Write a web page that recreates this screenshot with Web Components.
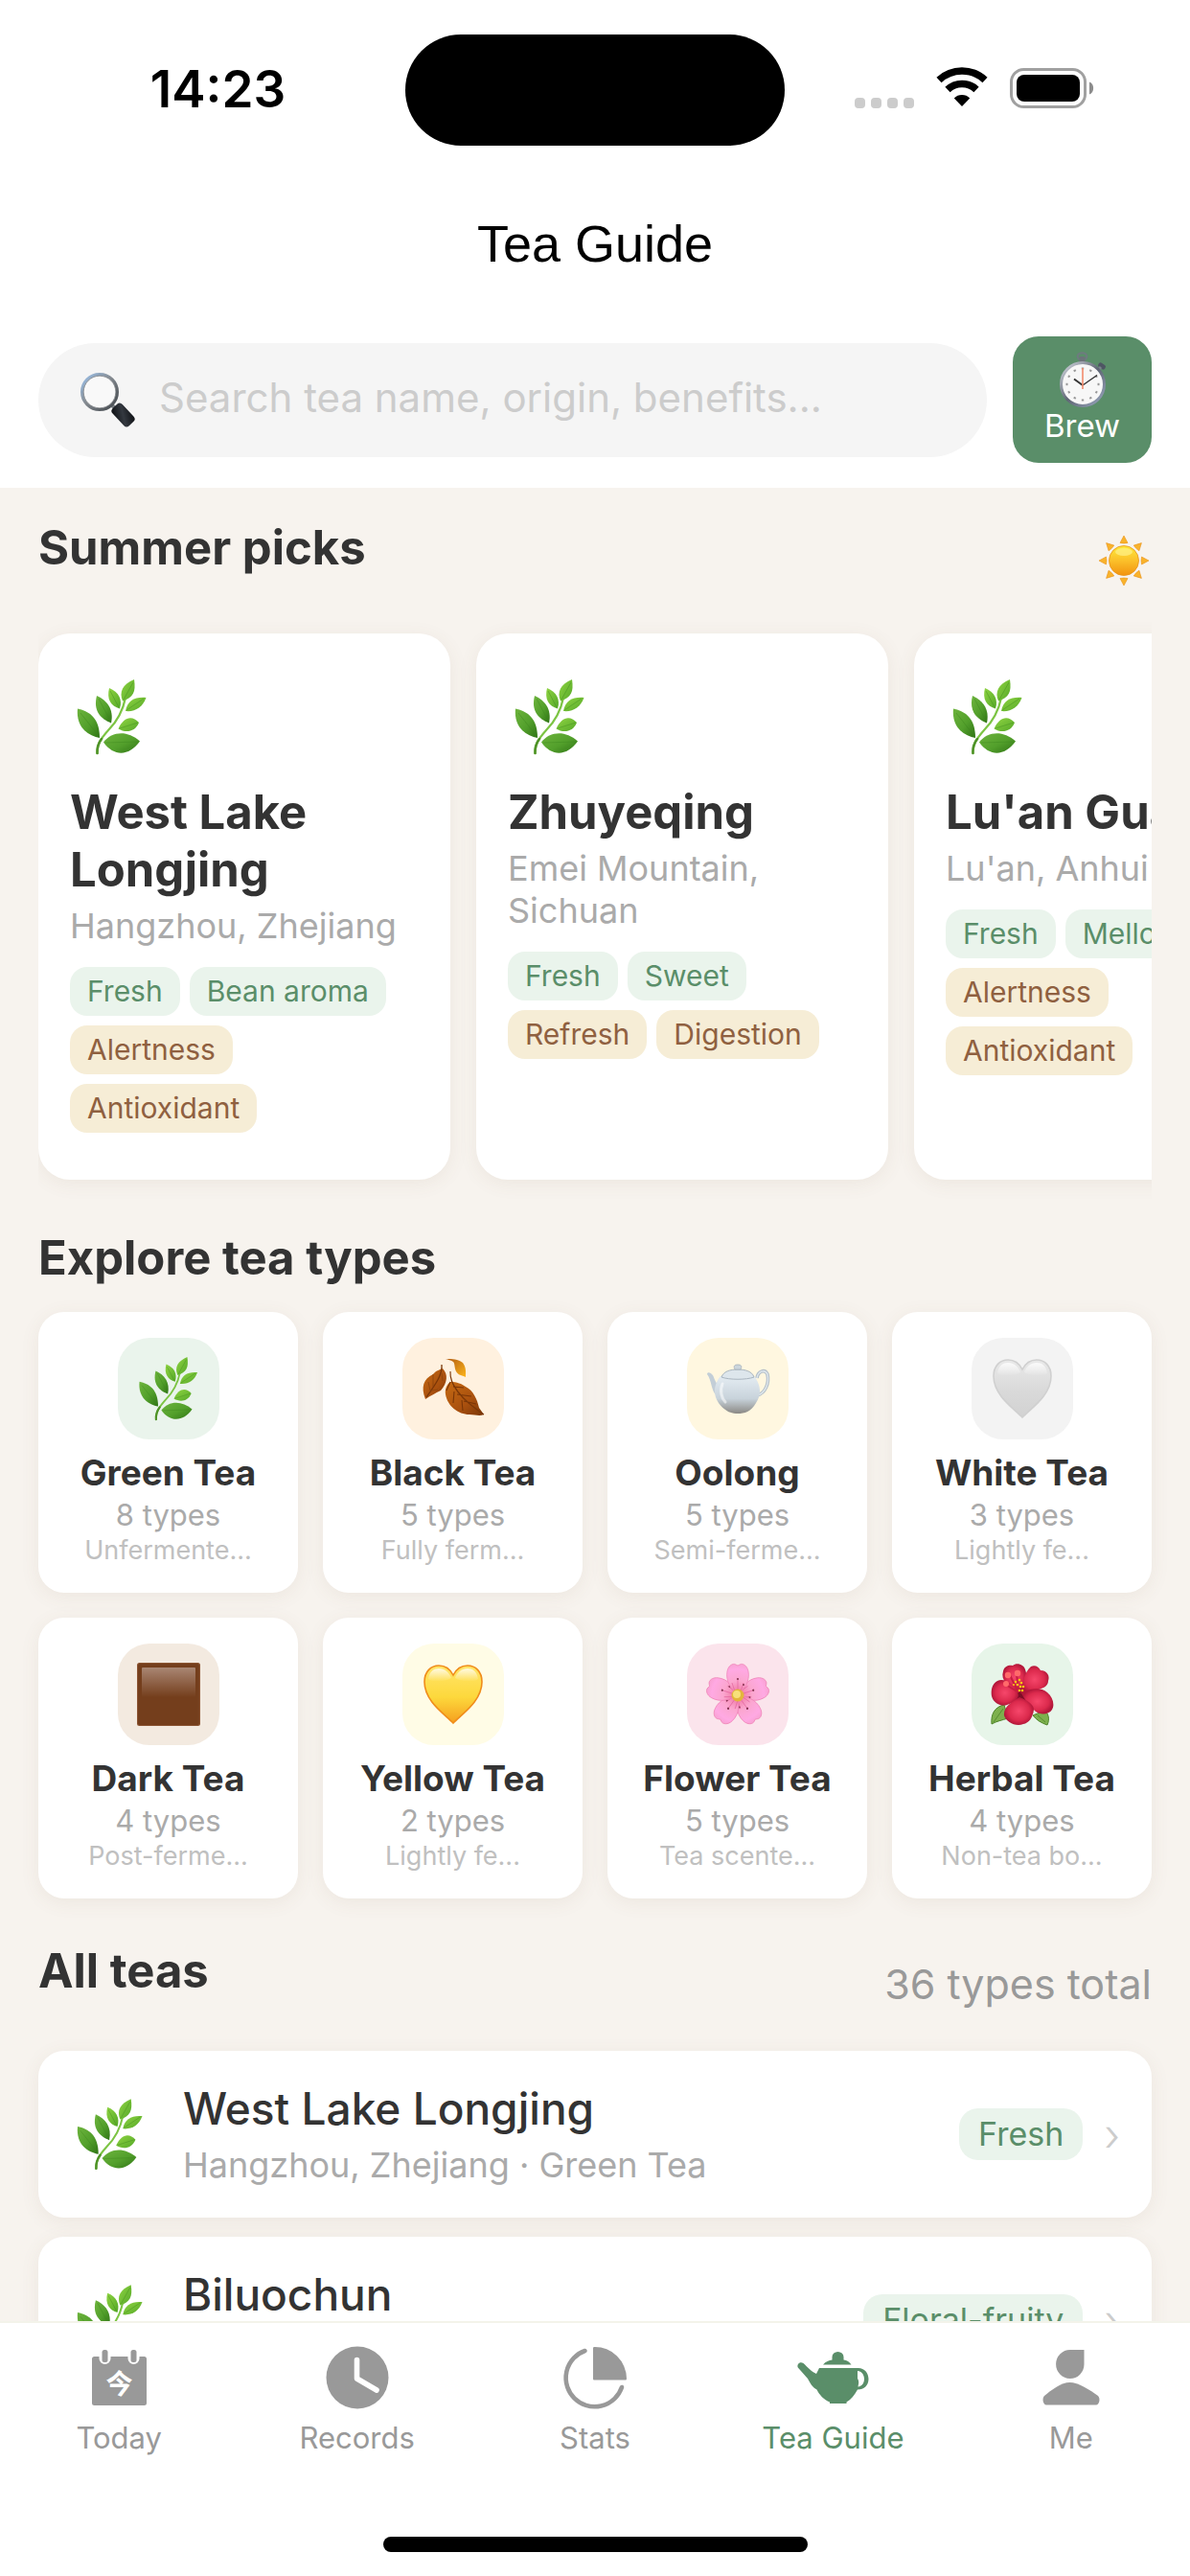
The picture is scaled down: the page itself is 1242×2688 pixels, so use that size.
<!DOCTYPE html>
<html lang="en">
<head>
<meta charset="utf-8">
<meta name="viewport" content="width=device-width, initial-scale=1">
<title>Tea Guide</title>
<style>
  html, body { margin: 0; height: 100%; }
  body {
    font-family: Inter, "Noto Sans CJK SC", sans-serif;
    color: #333;
    background: #f7f3ee;
    --green: #5a8e69;
    --mint: #eaf4ec;
    --sand: #f6edd6;
    --brown: #8f6040;
    --edge: 40px;
  }
</style>
</head>
<body>
<tea-app></tea-app>

<script>
/* Shared helper: attach an open root filled with styles and markup. */
const COMMON = `*{box-sizing:border-box} a{color:inherit;text-decoration:none} button,input{font:inherit;border:0;margin:0}`;
function define(name, css, html) {
  customElements.define(name, class extends HTMLElement {
    connectedCallback() {
      if (this.shadowRoot) return;
      const root = this.attachShadow({ mode: 'open' });
      const markup = typeof html === 'function' ? html(this) : html;
      root.innerHTML = `<style>${COMMON}${css}</style>${markup}`;
    }
  });
}
const attr = (el, n) => el.getAttribute(n) || '';

/* ---------- Icons ---------- */
const heart = (a, b, c, edge) => `<svg viewBox="0 0 66 66"><defs>
  <linearGradient id="h" x1="0" y1="0" x2="0" y2="1"><stop offset="0" stop-color="${a}"/><stop offset=".55" stop-color="${b}"/><stop offset="1" stop-color="${c}"/></linearGradient>
  <linearGradient id="s" x1="0" y1="0" x2="0" y2="1"><stop offset="0" stop-color="#fff" stop-opacity=".8"/><stop offset="1" stop-color="#fff" stop-opacity="0"/></linearGradient></defs>
  <path d="M33 63C26 55 3 41 3 20C3 9 10 3 18 3C25 3 30 7 33 13C36 7 41 3 48 3C56 3 63 9 63 20C63 41 40 55 33 63Z" fill="url(#h)" stroke="${edge}" stroke-width="1.6"/>
  <path d="M7 17C8 9 13 6 18 6C24 6 29 10 31 16C25 20 12 21 7 17ZM35 16C37 10 42 6 48 6C53 6 58 9 59 17C54 21 41 20 35 16Z" fill="url(#s)"/></svg>`;

const petal = (r) => `<g transform="rotate(${r} 33 34)"><path d="M33 33C26 28 20 19 22 9C23 3 28 0 31 2L33 3L35 2C38 0 43 3 44 9C46 19 40 28 33 33Z" fill="url(#p)" stroke="#ee7fb4" stroke-width=".7"/>
  <path d="M33 30V18M30 30L27 21M36 30L39 21" stroke="#e2659f" stroke-width=".7" fill="none"/><circle cx="33" cy="17" r="1.1" fill="#84324f"/><circle cx="39" cy="23" r="1" fill="#84324f"/></g>`;

const ICONS = {
  herb: `<svg viewBox="0 0 72 78"><defs>
    <linearGradient id="a" x1="0" y1="0" x2="1" y2="1"><stop offset="0" stop-color="#6db43d"/><stop offset=".55" stop-color="#529f2b"/><stop offset="1" stop-color="#2f7415"/></linearGradient>
    <linearGradient id="b" x1="0" y1="0" x2="1" y2="1"><stop offset="0" stop-color="#8fd442"/><stop offset="1" stop-color="#55a828"/></linearGradient></defs>
    <path d="M20.5 77C20 68 24 62 32 53C41 44 47 34 50 19" fill="none" stroke="#7cc443" stroke-width="2.2" stroke-linecap="round"/>
    <path d="M20.5 77C20 70 22 66 25 62" fill="none" stroke="#4f9328" stroke-width="2.6" stroke-linecap="round"/>
    <path d="M0 30.500C12 33 23 40 23 61C12 59 -2 51 0 30.500Z" fill="url(#a)"/>
    <path d="M20 17C31 22 38 31 35 45.500C24 41 16 33 20 17Z" fill="url(#a)"/>
    <path d="M27 65.500C36 54 52 53 65 64.500C54 80 38 81 27 65.500Z" fill="url(#a)"/>
    <path d="M33 9C43 13 47 21 44 30.500C35 28 30 21 33 9Z" fill="url(#b)"/>
    <path d="M59 0C47 5 43 13 47 22.500C58 19 61 13 59 0Z" fill="url(#b)"/>
    <path d="M71.500 19C60 18 52 22 50 33C60 34 68 29 71.500 19Z" fill="url(#b)"/>
    <path d="M64 45C57 37 48 39 42.500 51.500C50 56 60 55 64 45Z" fill="url(#b)"/>
    <path d="M3 35L22 59M22 20L34 43M34 12L43 29M58 3L48 21M69 20L51 32M63 45L44 51M63 65L29 66" stroke="#3c861d" stroke-width=".7" opacity=".6" fill="none"/></svg>`,
  leaves: `<svg viewBox="0 0 66 66"><defs>
    <linearGradient id="l" x1="0" y1="0" x2="1" y2="1"><stop offset="0" stop-color="#c66b13"/><stop offset=".6" stop-color="#a9500e"/><stop offset="1" stop-color="#7a3607"/></linearGradient>
    <linearGradient id="m" x1="0" y1="0" x2="1" y2="1"><stop offset="0" stop-color="#b05a10"/><stop offset="1" stop-color="#fdb61d"/></linearGradient></defs>
    <path d="M25 2C32 2 38 2 43 6C47 11 46 17 46 21C42 19 38 19 36 15C34 11 35 7 33 5C30 3 28 3 25 2Z" fill="url(#m)"/>
    <path d="M4 44C-1 31 2 23 12 18C15 14 20 13 22 12C28 18 27 27 20 35C14 38 10 40 4 44Z" fill="url(#l)"/>
    <path d="M21 8C22 18 15 28 5 42" fill="none" stroke="#7a3607" stroke-width="1.300"/>
    <path d="M30 26C37 26 42 28 46 31C54 35 58 44 60 53L65 60C60 62 56 60 50 60C38 60 27 51 25 39C24 33 27 28 30 26Z" fill="url(#l)"/>
    <path d="M30 15C29 28 41 44 65 60M33 31L44 32M37 39L52 41M44 46L57 49M30 26L26 35M34 36L33 48M42 45L43 56" fill="none" stroke="#7a3607" stroke-width="1.100"/>
    <path d="M12 18L12 31M21 17L22 25M7 26L9 35L17 34" fill="none" stroke="#8b430a" stroke-width=".8"/></svg>`,
  teapot: `<svg viewBox="0 0 66 66"><defs>
    <linearGradient id="t" x1="0" y1="0" x2="0" y2="1"><stop offset="0" stop-color="#e4ecf2"/><stop offset=".6" stop-color="#c8d3db"/><stop offset="1" stop-color="#8b8985"/></linearGradient></defs>
    <path d="M53 22C54 15 61 12 64 18C66 27 62 38 53 40" fill="none" stroke="#b4bfc8" stroke-width="3.600"/>
    <path d="M53 22C54 15 61 12 64 18C66 27 62 38 53 40" fill="none" stroke="#dfe7ed" stroke-width="1.400"/>
    <path d="M1 18C1 15 5 16 7 19C9 23 10 28 14 30C13 34 12 37 11 40C5 36 6 24 1 18Z" fill="#c3ced7"/>
    <path d="M15 20C9 27 6 38 13 48C20 57 26 59 33 59C40 59 47 57 52 48C59 38 56 27 50 20Z" fill="url(#t)"/>
    <path d="M16 21C18 15 25 13 33 13C41 13 48 15 50 21C42 24 24 24 16 21Z" fill="#dde6ec" stroke="#a9b5bf" stroke-width="1"/>
    <path d="M30 13C28 9 30 8 33 8C36 8 38 9 36 13Z" fill="#cbd5dc" stroke="#a5b0b9" stroke-width=".8"/>
    <path d="M17 28C14 35 16 43 20 47" fill="none" stroke="#fff" stroke-width="3" opacity=".55" stroke-linecap="round"/></svg>`,
  whiteheart: heart('#e9e9e9', '#d9d9d9', '#d2d2d2', '#d0d0d0'),
  yellowheart: heart('#ffe56a', '#fdd83c', '#f59f1e', '#f08c1b'),
  square: `<svg viewBox="0 0 66 66"><defs><linearGradient id="q" x1="0" y1="0" x2="0" y2="1"><stop offset="0" stop-color="#a98673"/><stop offset="1" stop-color="#743e1c"/></linearGradient></defs>
    <rect x="0" y="0" width="66" height="66" rx="2.500" fill="#8a5331"/><rect x="1" y="1" width="64" height="64" rx="2" fill="#743e1c"/><rect x="5" y="5" width="56" height="31" rx="1" fill="url(#q)"/></svg>`,
  blossom: `<svg viewBox="0 0 66 66"><defs><radialGradient id="p" gradientUnits="userSpaceOnUse" cx="33" cy="34" r="34"><stop offset="0" stop-color="#ee6f9c"/><stop offset=".45" stop-color="#fba6cf"/><stop offset=".8" stop-color="#ffa9e3"/><stop offset="1" stop-color="#f7a0cf"/></radialGradient></defs>
    ${[72, 144, 216, 288, 0].map(petal).join('')}<circle cx="33" cy="34" r="6.500" fill="#e3b53c"/><circle cx="32" cy="33" r="4" fill="#f7e07a"/></svg>`,
  hibiscus: `<svg viewBox="0 0 66 66"><defs><radialGradient id="r"><stop offset="0" stop-color="#f6476b"/><stop offset=".7" stop-color="#dc2a4d"/><stop offset="1" stop-color="#b3173a"/></radialGradient></defs>
    <path d="M1 64C0 54 4 46 14 44L18 58C12 60 6 61 1 64ZM59 65C62 59 60 52 56 50L44 55C48 60 53 63 59 65Z" fill="#7db04d" stroke="#4e8329" stroke-width="1"/>
    <path d="M3 62L13 48M57 62L49 55" stroke="#4e8329" stroke-width=".8"/>
    <circle cx="30" cy="31" r="13" fill="#7d0d26"/>
    <path d="M29 30C18 25 10 18 13 9C14 3 20 2 23 3C27 -1 35 2 36 7C39 15 36 24 29 30Z" fill="url(#r)"/>
    <path d="M31 32C33 22 35 10 42 4C46 2 50 4 52 8C59 8 62 14 60 19C60 28 45 29 31 32Z" fill="url(#r)"/>
    <path d="M29 34C27 25 15 15 7 19C1 22 0 30 1 35C3 43 12 46 17 44C22 42 28 40 29 34Z" fill="url(#r)"/>
    <path d="M32 32C40 27 52 25 59 31C65 36 67 44 64 49C61 54 52 55 47 51C41 46 36 39 32 32Z" fill="url(#r)"/>
    <path d="M30 36C36 38 45 43 45 49C44 57 40 63 34 64C26 67 16 62 14 55C13 46 22 41 30 36Z" fill="url(#r)"/>
    <path d="M29 31L20 13M29 31L27 11M29 31L16 23" stroke="#c61d3f" stroke-width="2"/>
    <g fill="#ff6a6a"><circle cx="18" cy="13" r="3.200"/><circle cx="28" cy="11" r="3.200"/><circle cx="16" cy="22" r="3"/></g>
    <g fill="#f4c514"><circle cx="26" cy="20" r="1.300"/><circle cx="30" cy="18" r="1.300"/><circle cx="28" cy="23" r="1.300"/><circle cx="32" cy="21" r="1.300"/><circle cx="31" cy="25" r="1.300"/><circle cx="34" cy="25" r="1.300"/><circle cx="30" cy="29" r="1.300"/><circle cx="33" cy="29" r="1.300"/><circle cx="24" cy="23" r="1.100"/></g></svg>`,
  sun: `<svg viewBox="0 0 54 54"><defs><linearGradient id="u" x1="0" y1="0" x2="0" y2="1"><stop offset="0" stop-color="#fde93a"/><stop offset=".5" stop-color="#fbc02a"/><stop offset="1" stop-color="#f2930f"/></linearGradient></defs>
    ${[0,45,90,135,180,225,270,315].map(r => `<path transform="rotate(${r} 27 27)" d="M27 1L31 8.500Q27 9.500 23 8.500Z" fill="#f9b32b" stroke="#e9921b" stroke-width=".6"/>`).join('')}
    <circle cx="27" cy="27" r="15.500" fill="url(#u)" stroke="#e89318" stroke-width=".8"/><ellipse cx="27" cy="18" rx="9" ry="4" fill="#fff59a" opacity=".6"/></svg>`,
  lens: `<svg viewBox="0 0 60 60"><defs><linearGradient id="n" x1="0" y1="0" x2="1" y2="1"><stop offset="0" stop-color="#9cc3ee"/><stop offset=".45" stop-color="#858b91"/><stop offset="1" stop-color="#3e4348"/></linearGradient>
    <linearGradient id="o" x1="0" y1="1" x2="1" y2="0"><stop offset="0" stop-color="#0b0d10"/><stop offset=".5" stop-color="#343940"/><stop offset="1" stop-color="#0b0d10"/></linearGradient></defs>
    <path d="M34 35L40 41" stroke="#777c82" stroke-width="4"/>
    <rect x="34" y="39" width="25" height="14" rx="4" transform="rotate(47 46.500 46)" fill="url(#o)"/>
    <circle cx="22" cy="22" r="18.500" fill="#f9f9f9" stroke="url(#n)" stroke-width="3"/><circle cx="22" cy="22" r="16.800" fill="none" stroke="#50555a" stroke-width=".6"/></svg>`,
  stopwatch: `<svg viewBox="0 0 50 58"><defs><linearGradient id="w" x1="0" y1="0" x2="1" y2="1"><stop offset="0" stop-color="#d7dce4"/><stop offset=".5" stop-color="#5e6573"/><stop offset="1" stop-color="#9aa7c0"/></linearGradient></defs>
    <ellipse cx="24.500" cy="5" rx="4.800" ry="3.800" fill="none" stroke="#6f7a80" stroke-width="2"/><rect x="21.500" y="5" width="6" height="7" rx="1" fill="#6c737a"/>
    <rect x="41" y="12.500" width="8" height="5" rx="2" transform="rotate(35 45 15)" fill="#4e5663"/><path d="M41 19L44 16" stroke="#7a828c" stroke-width="3"/>
    <circle cx="25" cy="34" r="22.500" fill="#f7f7f7" stroke="url(#w)" stroke-width="3"/>
    ${Array.from({length:12},(_, i)=>`<path transform="rotate(${i*30} 25 34)" d="M23.800 17.500h2.400" stroke="#999" stroke-width="2"/>`).join('')}
    <path d="M25 35L16 28.500" stroke="#333" stroke-width="2"/><path d="M25 35L40 24.500" stroke="#333" stroke-width="1.400"/><path d="M25 39V17" stroke="#f28b6d" stroke-width="1.600"/></svg>`,
  today: `<svg viewBox="0 0 57 58"><path d="M2.500 7H7.500V9A6 6 0 0 0 19.500 9V7H37.500V9A6 6 0 0 0 49.500 9V7H54.500Q57 7 57 9.500V55.500Q57 58 54.500 58H2.500Q0 58 0 55.500V9.500Q0 7 2.500 7Z" fill="currentColor"/>
    <rect x="10.500" y="0" width="6" height="13" rx="2.500" fill="currentColor"/><rect x="40.500" y="0" width="6" height="13" rx="2.500" fill="currentColor"/>
    <text x="28.500" y="46" text-anchor="middle" font-size="28" font-weight="700" fill="#fff" style="font-family:'Noto Sans CJK SC',sans-serif">今</text></svg>`,
  records: `<svg viewBox="0 0 66 66"><circle cx="33" cy="33" r="32.500" fill="currentColor"/><path d="M32.500 14.500V34L53 46" fill="none" stroke="#fff" stroke-width="5.600" stroke-linecap="round" stroke-linejoin="round"/></svg>`,
  stats: `<svg viewBox="0 0 67 66"><path d="M22.500 5A30 30 0 1 0 61 43" fill="none" stroke="currentColor" stroke-width="4.600" stroke-linecap="round"/>
    <path d="M31 2Q31 1 32.500 1A33 33.500 0 0 1 66 34Q66 35.500 65 35.500H32Q31 35.500 31 34.500Z" fill="currentColor"/></svg>`,
  guide: `<svg viewBox="0 0 75 54"><path d="M27 13.500C30 10 33 9 36.500 8.500V5.500A6 5.500 0 0 1 48.500 5.500V8.500C52 9 54.500 10.500 56.500 13.500Z" fill="currentColor"/>
    <path fill-rule="evenodd" d="M23 17H64C70 17 74.500 22 74.500 28.500C74.500 35 70 39.500 63 39.500C60 45 56 50 51.500 52.500V54H34V52.500C28 50 23 45 20.500 39.500C16 37 14 33.500 11 28L.8 16.500C-.8 13 3 9.500 6.500 12C11 16 15 21 20 23ZM63 20V28C65 31 64 34 63.500 36.500C68 36 70 32 70 28.500C70 24 67 20 63 20Z" fill="currentColor"/></svg>`,
  me: `<svg viewBox="0 0 60 58"><path d="M29 0H43.500V15A14.700 15 0 1 1 29 0Z" fill="currentColor"/><path d="M4 57.500C1 57.500 -1 51 2 48C9 42 20 34 28.500 34C37 34 50 42 58 48C61 51 59 57.500 56 57.500Z" fill="currentColor"/></svg>`,
  wifi: `<svg viewBox="0 0 54 41"><g fill="none" stroke="#000"><path d="M3 12.500A35 35 0 0 1 51 12.500" stroke-width="7.500"/><path d="M12 22.500A21.500 21.500 0 0 1 42 22.500" stroke-width="7.500"/></g><path d="M27 40L18.800 31.500A11.500 11.500 0 0 1 35.200 31.500Z"/></svg>`,
  battery: `<svg viewBox="0 0 88 42"><rect x="1.500" y="1.500" width="77" height="39" rx="13" fill="none" stroke="#a0a0a0" stroke-width="3"/><rect x="7" y="7" width="66" height="28" rx="8"/><path d="M83 14.500C88.500 16.500 88.500 25.500 83 27.500Z" fill="#8c8c8c"/></svg>`
};
define('tea-icon', `:host{display:block;flex:none} svg{display:block;width:100%;height:100%;overflow:visible}`,
  el => ICONS[attr(el, 'name')]);

/* ---------- Building blocks ---------- */
define('status-bar', `
  :host{display:grid;grid-template-columns:1fr 396px 1fr;align-items:center;height:187px;color:#000}
  time{font-size:53px;line-height:60px;font-weight:600;text-align:center;padding:0 0 2px 32px}
  .island{height:116px;border-radius:58px;background:#000}
  .right{display:flex;justify-content:center;align-items:center;padding:0 28px 4px 0;gap:23px}
  .dots{display:flex;gap:6px;align-self:flex-end}
  .dots i{width:11px;height:11px;border-radius:4px;background:#ccc}
  .wifi{width:54px;height:41px}.bat{width:88px;height:42px}
`, `<time>14:23</time><div class="island"></div>
  <div class="right"><span class="dots"><i></i><i></i><i></i><i></i></span><tea-icon class="wifi" name="wifi"></tea-icon><tea-icon class="bat" name="battery"></tea-icon></div>`);

define('tea-search', `
  :host{display:flex;align-items:center;gap:27px;padding:30px var(--edge) 26px}
  label{flex:1;display:flex;align-items:center;gap:24px;height:119px;padding:0 42px;border-radius:60px;background:#f5f5f5}
  tea-icon{width:60px;height:60px}
  input{flex:1;min-width:0;background:none;outline:0;padding:0 0 4px;font-size:42px;line-height:50px;color:#333}
  input::placeholder{color:#ccc;opacity:1}
  button{width:145px;height:132px;padding:0 0 4px;border-radius:27px;background:var(--green);color:#fff;display:flex;flex-direction:column;align-items:center;justify-content:center;font-size:33px;line-height:38px}
  button tea-icon{width:50px;height:58px}
`, `<label><tea-icon name="lens"></tea-icon><input type="search" aria-label="Search teas" placeholder="Search tea name, origin, benefits..."></label>
  <button type="button"><tea-icon name="stopwatch"></tea-icon>Brew</button>`);

define('section-head', `
  :host{display:flex;justify-content:space-between;align-items:center;color:#999;font-size:43px;line-height:50px}
  h2{margin:0 0 26px;font-size:49px;line-height:60px;font-weight:700;color:#333}
`, `<h2><slot></slot></h2><slot name="extra"></slot>`);

define('tea-tag', `
  :host{display:block;padding:8px 18px;border-radius:18px;background:var(--mint);color:var(--green);font-size:30px;line-height:35px;white-space:nowrap}
  :host([tone="sand"]){background:var(--sand);color:var(--brown)}
  :host([size="large"]){padding:8px 20px;font-size:34px;line-height:38px;border-radius:20px}
`, `<slot></slot>`);

define('pick-card', `
  :host{display:block;flex:none;width:430px;background:#fff;border-radius:33px;box-shadow:0 4px 20px rgba(120,90,60,.08)}
  a{display:block;padding:33px 33px 49px}
  .icon{display:grid;place-items:center;width:88px;height:108px;margin-bottom:16px}
  tea-icon{width:72px;height:78px}
  h3{margin:0 0 6px;font-size:49px;line-height:60px;font-weight:700}
  p{margin:0 0 21px;font-size:36px;line-height:44px;color:#aaa}
  .tags{display:flex;flex-wrap:wrap;gap:10px}
`, el => `<a href="#tea"><span class="icon"><tea-icon name="herb"></tea-icon></span><h3>${attr(el,'name')}</h3><p>${attr(el,'origin')}</p><div class="tags"><slot></slot></div></a>`);

define('type-card', `
  :host{display:block;min-width:0;background:#fff;border-radius:27px;box-shadow:0 4px 20px rgba(120,90,60,.08);text-align:center}
  a{display:block;padding:27px 13px 28px}
  .tile{display:grid;place-items:center;width:106px;height:106px;margin:0 auto 14px;border-radius:33px;background:var(--tile)}
  tea-icon{width:66px;height:66px}
  h3{margin:0 0 5px;font-size:37px;line-height:42px;font-weight:700}
  p{margin:0;white-space:nowrap}
  .count{font-size:31px;line-height:36px;color:#aaa;margin-bottom:3px}
  .note{font-size:27px;line-height:32px;color:#c0c0c0}
`, el => `<a href="#type"><span class="tile"><tea-icon name="${attr(el,'icon')}"></tea-icon></span><h3>${attr(el,'name')}</h3><p class="count">${attr(el,'count')}</p><p class="note">${attr(el,'note')}</p></a>`);

define('tea-row', `
  :host{display:block;background:#fff;border-radius:27px;box-shadow:0 4px 20px rgba(120,90,60,.08)}
  a{display:flex;align-items:center;padding:33px}
  .icon{display:grid;place-items:center;width:84px;height:84px;margin-right:34px}
  tea-icon{width:68px;height:74px}
  .text{flex:1;min-width:0}
  h3{margin:0 0 10px;font-size:46px;line-height:54px;font-weight:500}
  p{margin:0;font-size:36px;line-height:44px;color:#aaa}
  .go{margin-left:22px;font-size:46px;line-height:54px;font-weight:300;color:#ccc}
`, el => `<a href="#tea"><span class="icon"><tea-icon name="herb"></tea-icon></span><div class="text"><h3>${attr(el,'name')}</h3><p>${attr(el,'origin')}</p></div><tea-tag size="large">${attr(el,'tag')}</tea-tag><span class="go">›</span></a>`);

define('tab-item', `
  :host{display:block;flex:1;color:#999}
  :host([active]){color:var(--green)}
  a{display:block;padding-top:20px;text-align:center;font-size:31px;line-height:38px}
  .icon{display:grid;place-items:center;height:74px;margin-bottom:7px}
  tea-icon{width:var(--w);height:var(--h)}
`, el => `<a href="#${attr(el,'icon')}"><span class="icon"><tea-icon name="${attr(el,'icon')}"></tea-icon></span><slot></slot></a>`);

define('tab-bar', `
  :host{display:block;flex:none;background:#fff;border-top:2px solid #f3f3ea;padding-bottom:25px}
  nav{display:flex}
  .home{width:443px;height:16px;margin:84px auto 0;border-radius:8px;background:#000}
`, `<nav aria-label="Main"><slot></slot></nav><div class="home"></div>`);

/* ---------- Page ---------- */
define('tea-app', `
  :host{display:flex;flex-direction:column;height:100vh}
  header{flex:none;background:#fff}
  h1{margin:0;font-family:"Liberation Sans",Arial,sans-serif;font-size:54px;line-height:134px;font-weight:400;color:#000;text-align:center}
  main{flex:1;min-height:0;overflow:auto;scrollbar-width:none;padding:33px var(--edge) 0}
  section{margin-bottom:28px}
  .sun{width:54px;height:54px;margin-right:2px}
  .scroller{display:flex;gap:27px;margin-top:21px;padding:12px 0 24px;overflow:auto;scrollbar-width:none}
  .grid{display:grid;grid-template-columns:repeat(4,1fr);gap:26px;padding-bottom:18px}
  .list{display:flex;flex-direction:column;gap:20px;margin-top:27px;padding-bottom:40px}
`, `
<header>
  <status-bar></status-bar>
  <h1>Tea Guide</h1>
  <tea-search></tea-search>
</header>
<main>
  <section>
    <section-head>Summer picks<tea-icon slot="extra" class="sun" name="sun"></tea-icon></section-head>
    <div class="scroller">
      <pick-card name="West Lake Longjing" origin="Hangzhou, Zhejiang"><tea-tag>Fresh</tea-tag><tea-tag>Bean aroma</tea-tag><tea-tag tone="sand">Alertness</tea-tag><tea-tag tone="sand">Antioxidant</tea-tag></pick-card>
      <pick-card name="Zhuyeqing" origin="Emei Mountain, Sichuan"><tea-tag>Fresh</tea-tag><tea-tag>Sweet</tea-tag><tea-tag tone="sand">Refresh</tea-tag><tea-tag tone="sand">Digestion</tea-tag></pick-card>
      <pick-card name="Lu'an Guapian" origin="Lu'an, Anhui"><tea-tag>Fresh</tea-tag><tea-tag>Mellow</tea-tag><tea-tag tone="sand">Alertness</tea-tag><tea-tag tone="sand">Antioxidant</tea-tag></pick-card>
    </div>
  </section>
  <section>
    <section-head>Explore tea types</section-head>
    <div class="grid">
      <type-card style="--tile:#eaf4ec" icon="herb" name="Green Tea" count="8 types" note="Unfermente..."></type-card>
      <type-card style="--tile:#fff1df" icon="leaves" name="Black Tea" count="5 types" note="Fully ferm..."></type-card>
      <type-card style="--tile:#fff7e0" icon="teapot" name="Oolong" count="5 types" note="Semi-ferme..."></type-card>
      <type-card style="--tile:#f3f3f3" icon="whiteheart" name="White Tea" count="3 types" note="Lightly fe..."></type-card>
      <type-card style="--tile:#f3eae0" icon="square" name="Dark Tea" count="4 types" note="Post-ferme..."></type-card>
      <type-card style="--tile:#fffce6" icon="yellowheart" name="Yellow Tea" count="2 types" note="Lightly fe..."></type-card>
      <type-card style="--tile:#fbe4ec" icon="blossom" name="Flower Tea" count="5 types" note="Tea scente..."></type-card>
      <type-card style="--tile:#e7f5e9" icon="hibiscus" name="Herbal Tea" count="4 types" note="Non-tea bo..."></type-card>
    </div>
  </section>
  <section>
    <section-head>All teas<span slot="extra">36 types total</span></section-head>
    <div class="list">
      <tea-row name="West Lake Longjing" origin="Hangzhou, Zhejiang · Green Tea" tag="Fresh"></tea-row>
      <tea-row name="Biluochun" origin="Suzhou, Jiangsu · Green Tea" tag="Floral-fruity"></tea-row>
    </div>
  </section>
</main>
<tab-bar>
  <tab-item icon="today" style="--w:57px;--h:58px">Today</tab-item>
  <tab-item icon="records" style="--w:66px;--h:66px">Records</tab-item>
  <tab-item icon="stats" style="--w:67px;--h:66px">Stats</tab-item>
  <tab-item icon="guide" style="--w:75px;--h:54px" active>Tea Guide</tab-item>
  <tab-item icon="me" style="--w:60px;--h:58px">Me</tab-item>
</tab-bar>`);
</script>
</body>
</html>
